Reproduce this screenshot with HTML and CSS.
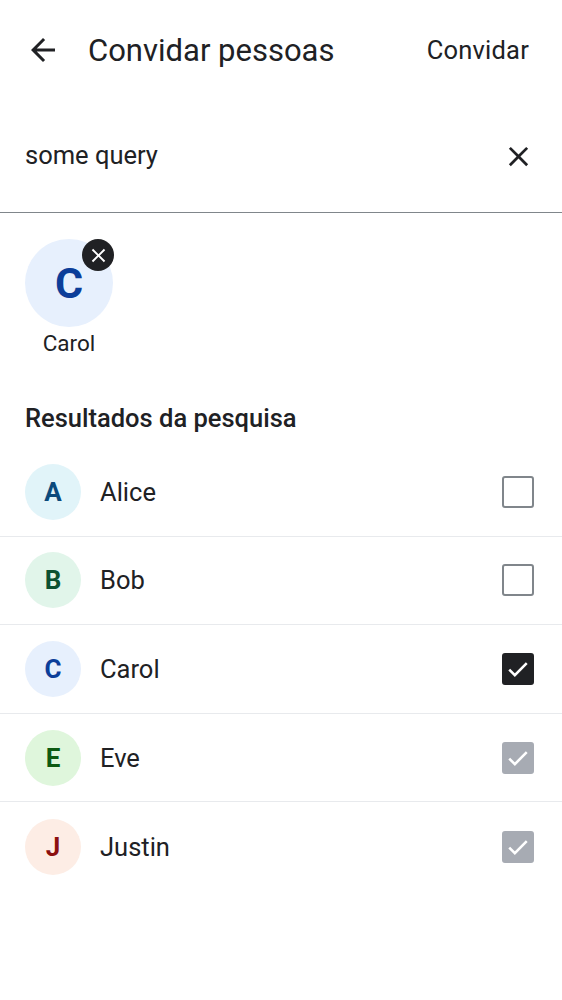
FILE: index.html
```html
<!DOCTYPE html>
<html lang="pt">
<head>
<meta charset="utf-8">
<link rel="stylesheet" href="styles.css">
</head>
<body>
<div class="screen">
  <header class="topbar">
    <button class="icon-btn back" aria-label="Voltar">
      <svg viewBox="0 0 24 24" width="36" height="36"><path d="M20 11H7.83l5.59-5.59L12 4l-8 8 8 8 1.41-1.41L7.83 13H20v-2z" fill="#202124"/></svg>
    </button>
    <h1 class="title">Convidar pessoas</h1>
    <button class="action">Convidar</button>
  </header>

  <div class="search">
    <span class="query">some query</span>
    <button class="icon-btn clear" aria-label="Limpar">
      <svg viewBox="0 0 24 24" width="33" height="33"><path d="M19 6.41L17.59 5 12 10.59 6.41 5 5 6.41 10.59 12 5 17.59 6.41 19 12 13.41 17.59 19 19 17.59 13.41 12z" fill="#202124"/></svg>
    </button>
  </div>

  <div class="chips">
    <div class="chip">
      <div class="chip-avatar">
        <span>C</span>
        <span class="chip-remove">
          <svg viewBox="0 0 24 24" width="23" height="23"><path d="M19 6.41L17.59 5 12 10.59 6.41 5 5 6.41 10.59 12 5 17.59 6.41 19 12 13.41 17.59 19 19 17.59 13.41 12z" fill="#ffffff"/></svg>
        </span>
      </div>
      <div class="chip-label">Carol</div>
    </div>
  </div>

  <h2 class="section">Resultados da pesquisa</h2>

  <ul class="list">
    <li class="row">
      <span class="avatar a-alice">A</span>
      <span class="name">Alice</span>
      <span class="check"></span>
    </li>
    <li class="row">
      <span class="avatar a-bob">B</span>
      <span class="name">Bob</span>
      <span class="check"></span>
    </li>
    <li class="row">
      <span class="avatar a-carol">C</span>
      <span class="name">Carol</span>
      <span class="check checked"><svg viewBox="0 0 24 24" width="28" height="28"><path d="M4.5 12.5l4.8 4.8L19.5 7" fill="none" stroke="#fff" stroke-width="2.2"/></svg></span>
    </li>
    <li class="row">
      <span class="avatar a-eve">E</span>
      <span class="name">Eve</span>
      <span class="check disabled"><svg viewBox="0 0 24 24" width="28" height="28"><path d="M4.5 12.5l4.8 4.8L19.5 7" fill="none" stroke="#fff" stroke-width="2.2"/></svg></span>
    </li>
    <li class="row last">
      <span class="avatar a-justin">J</span>
      <span class="name">Justin</span>
      <span class="check disabled"><svg viewBox="0 0 24 24" width="28" height="28"><path d="M4.5 12.5l4.8 4.8L19.5 7" fill="none" stroke="#fff" stroke-width="2.2"/></svg></span>
    </li>
  </ul>
</div>
</body>
</html>
```

FILE: styles.css
```css
* { box-sizing: border-box; }
html, body { margin: 0; padding: 0; background: #fff; }
body {
  font-family: Roboto, "Noto Sans", "Liberation Sans", sans-serif;
  color: #202124;
}
button {
  font-family: inherit;
  background: none;
  border: 0;
  padding: 0;
  margin: 0;
  color: inherit;
  cursor: pointer;
}
.screen { width: 562px; }

.topbar {
  height: 100px;
  display: flex;
  align-items: center;
  padding: 0 33px 0 25px;
}
.icon-btn {
  display: flex;
  align-items: center;
  justify-content: center;
}
.back { width: 36px; height: 36px; }
.title {
  margin: 0 0 0 27px;
  font-size: 31px;
  font-weight: 400;
  flex: 1;
  letter-spacing: 0;
}
.action {
  font-size: 25.5px;
  font-weight: 400;
  letter-spacing: 0.2px;
}

.search {
  height: 113px;
  display: flex;
  align-items: center;
  padding: 0 28px 0 25px;
  border-bottom: 1px solid #80868b;
}
.query {
  flex: 1;
  font-size: 25.5px;
  padding-bottom: 2px;
}
.clear { width: 33px; height: 33px; margin-right: -1px; }

.chips {
  padding: 26px 25px 0;
  display: flex;
}
.chip {
  width: 88px;
  display: flex;
  flex-direction: column;
  align-items: center;
}
.chip-avatar {
  position: relative;
  width: 88px;
  height: 88px;
  border-radius: 50%;
  background: #e7f0fd;
  color: #0c3e99;
  font-weight: 700;
  font-size: 43px;
  display: flex;
  align-items: center;
  justify-content: center;
}
.chip-remove {
  position: absolute;
  top: 0;
  right: -1px;
  width: 32px;
  height: 32px;
  border-radius: 50%;
  background: #202124;
  display: flex;
  align-items: center;
  justify-content: center;
}
.chip-label {
  margin-top: 3px;
  font-size: 22.5px;
  line-height: 26px;
}

.section {
  margin: 47px 0 0;
  padding: 0 25px;
  font-size: 25.5px;
  font-weight: 500;
  line-height: 30px;
}

.list {
  list-style: none;
  margin: 15px 0 0;
  padding: 0;
}
.row {
  height: 88.6px;
  display: flex;
  align-items: center;
  padding: 0 28px 0 25px;
  border-bottom: 1px solid #e8eaed;
}
.row.last { border-bottom: 0; }
.avatar {
  width: 56px;
  height: 56px;
  border-radius: 50%;
  display: flex;
  align-items: center;
  justify-content: center;
  font-weight: 700;
  font-size: 26px;
  flex: none;
}
.a-alice { background: #e1f4f9; color: #0b4a7c; }
.a-bob { background: #e1f5ea; color: #0b5132; }
.a-carol { background: #e7f0fd; color: #0c3e99; }
.a-eve { background: #dff6dc; color: #0d5a12; }
.a-justin { background: #fdede5; color: #8c0f0f; }
.name {
  flex: 1;
  margin-left: 19px;
  font-size: 25.5px;
}
.check {
  width: 32px;
  height: 32px;
  border: 2.5px solid #80868b;
  border-radius: 3px;
  display: flex;
  align-items: center;
  justify-content: center;
}
.check.checked { background: #202124; border-color: #202124; }
.check.disabled { background: #a7abb3; border-color: #a7abb3; }
```
